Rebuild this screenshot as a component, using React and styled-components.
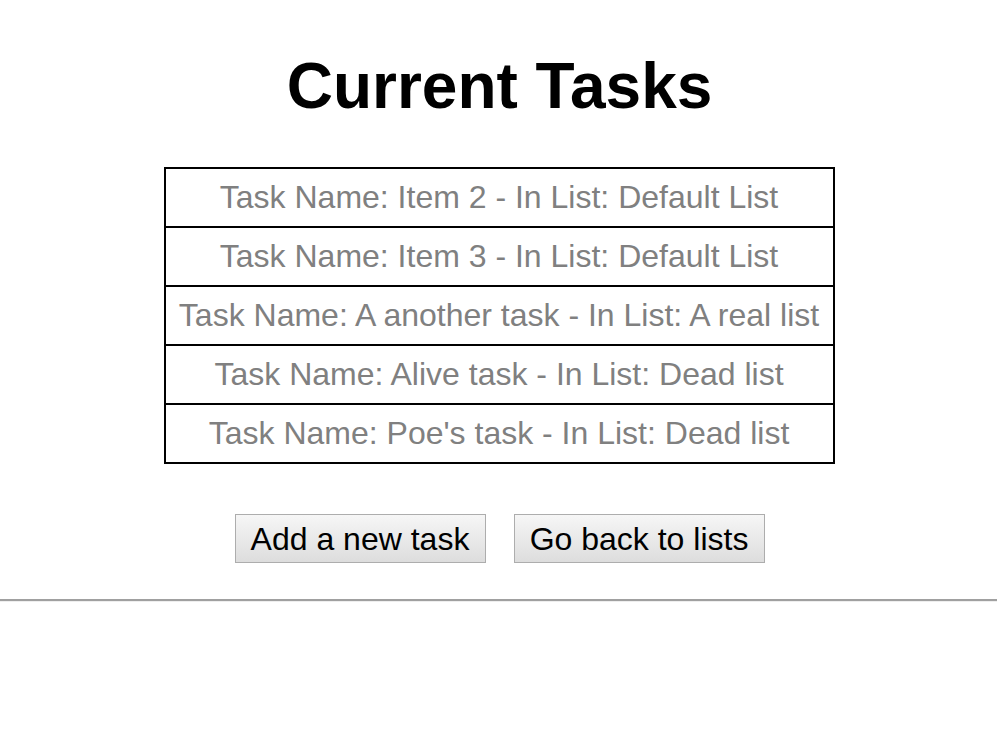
import React from 'react';
import styled, { createGlobalStyle } from 'styled-components';

const GlobalStyle = createGlobalStyle`
  body {
    margin: 0;
    background: #fff;
    font-family: "Liberation Sans", Arial, sans-serif;
  }
`;

const Page = styled.div`
  display: flex;
  flex-direction: column;
  align-items: center;
  padding-top: 49px;
`;

const Title = styled.h1`
  margin: 0 0 44px 2px;
  font-size: 64px;
  line-height: 74px;
  font-weight: bold;
  color: #000;
`;

const TaskTable = styled.table`
  border-collapse: collapse;
  border: 2px solid #000;
  margin-left: 2px;
`;

const Cell = styled.td`
  border: 2px solid #000;
  padding: 10px 14px 10px 13px;
  font-size: 32px;
  line-height: 37px;
  color: gray;
  text-align: center;
  white-space: nowrap;
`;

const Actions = styled.div`
  display: flex;
  gap: 28px;
  margin-top: 50px;
  margin-left: 2px;
`;

const Button = styled.button`
  font-family: "Liberation Sans", Arial, sans-serif;
  font-size: 32px;
  line-height: 36px;
  height: 49px;
  padding: 0 12px;
  color: #000;
  border: 1px solid #adadad;
  border-radius: 0;
  background: linear-gradient(#f6f6f6, #dddddd);
  width: ${p => p.$width}px;
`;

const Rule = styled.hr`
  width: 100%;
  margin: 36px 0 0;
  border: 0;
  border-top: 2px solid #a0a0a0;
  border-bottom: 1px solid #eeeeee;
`;

const tasks = [
  { name: 'Item 2', list: 'Default List' },
  { name: 'Item 3', list: 'Default List' },
  { name: 'A another task', list: 'A real list' },
  { name: 'Alive task', list: 'Dead list' },
  { name: "Poe's task", list: 'Dead list' },
];

export default function App() {
  return (
    <>
      <GlobalStyle />
      <Page>
        <Title>Current Tasks</Title>
        <TaskTable>
          <tbody>
            {tasks.map((t, i) => (
              <tr key={i}>
                <Cell>
                  Task Name: {t.name} - In List: {t.list}
                </Cell>
              </tr>
            ))}
          </tbody>
        </TaskTable>
        <Actions>
          <Button $width={251}>Add a new task</Button>
          <Button $width={251}>Go back to lists</Button>
        </Actions>
        <Rule />
      </Page>
    </>
  );
}
